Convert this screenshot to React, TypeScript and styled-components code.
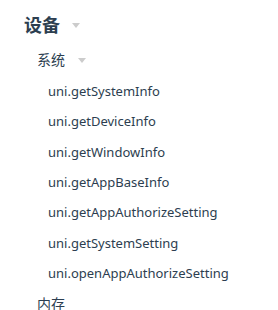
import React from "react";
import styled, { createGlobalStyle } from "styled-components";

const Global = createGlobalStyle`
  html, body { margin: 0; padding: 0; background: #fff; }
  body { font-family: "Noto Sans", "Noto Sans CJK SC", sans-serif; }
`;

const Nav = styled.nav`
  padding: 11px 0 0 24px;
`;

const Group = styled.div`
  display: flex;
  align-items: center;
  height: 26px;
  font-size: 18px;
  font-weight: 700;
  color: #2c3e50;
  gap: 12px;
`;

const Caret = styled.span<{ $size: number }>`
  width: 0;
  height: 0;
  border-left: ${(p) => p.$size}px solid transparent;
  border-right: ${(p) => p.$size}px solid transparent;
  border-top: ${(p) => p.$size + 1}px solid #ccc;
  margin-top: 2px;
`;

const Section = styled.div<{ $gapTop?: number }>`
  display: flex;
  align-items: center;
  height: 30px;
  margin-top: ${(p) => p.$gapTop ?? 7}px;
  padding-left: 13px;
  font-size: 14px;
  color: #2c3e50;
  gap: 13px;
`;

const List = styled.ul`
  list-style: none;
  margin: 2px 0 0;
  padding: 0 0 0 24px;
`;

const Item = styled.li`
  height: 30.3px;
  display: flex;
  align-items: center;
  font-size: 13px;
  color: #2c3e50;
`;

const items = [
  "uni.getSystemInfo",
  "uni.getDeviceInfo",
  "uni.getWindowInfo",
  "uni.getAppBaseInfo",
  "uni.getAppAuthorizeSetting",
  "uni.getSystemSetting",
  "uni.openAppAuthorizeSetting",
];

export default function App() {
  return (
    <>
      <Global />
      <Nav>
        <Group>
          设备
          <Caret $size={4} />
        </Group>
        <Section>
          系统
          <Caret $size={4} />
        </Section>
        <List>
          {items.map((t) => (
            <Item key={t}>{t}</Item>
          ))}
        </List>
        <Section $gapTop={0}>内存</Section>
      </Nav>
    </>
  );
}
